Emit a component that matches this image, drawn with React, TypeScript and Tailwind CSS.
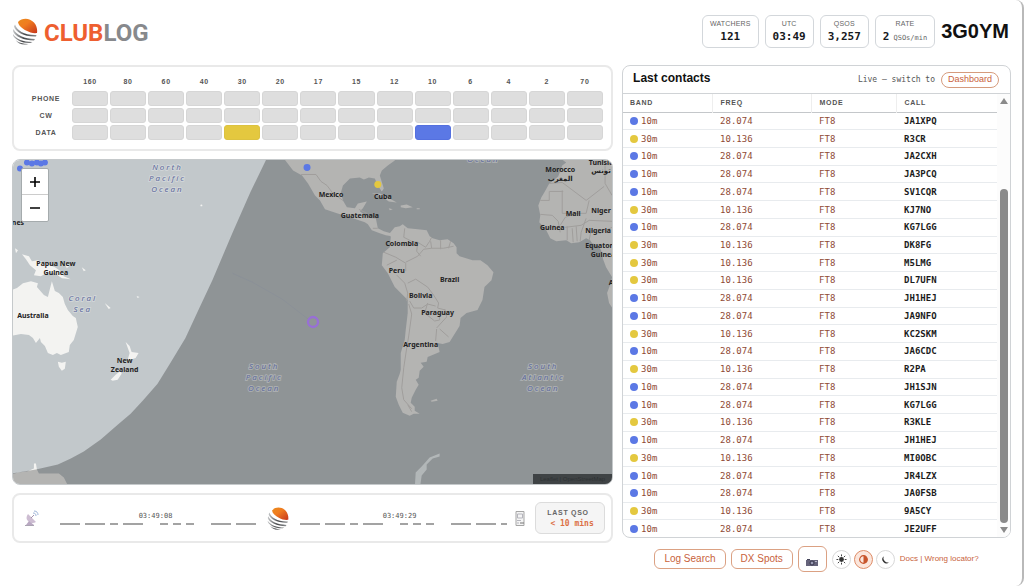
import { Fragment } from 'react'

type Contact = {
  band: '10m' | '30m';
  call: string;
}

const bands = ['160', '80', '60', '40', '30', '20', '17', '15', '12', '10', '6', '4', '2', '70']
const modes = ['PHONE', 'CW', 'DATA']

const contacts: Contact[] = [
  { band: '10m', call: 'JA1XPQ' },
  { band: '30m', call: 'R3CR' },
  { band: '10m', call: 'JA2CXH' },
  { band: '10m', call: 'JA3PCQ' },
  { band: '10m', call: 'SV1CQR' },
  { band: '30m', call: 'KJ7NO' },
  { band: '10m', call: 'KG7LGG' },
  { band: '30m', call: 'DK8FG' },
  { band: '30m', call: 'M5LMG' },
  { band: '30m', call: 'DL7UFN' },
  { band: '10m', call: 'JH1HEJ' },
  { band: '10m', call: 'JA9NFO' },
  { band: '30m', call: 'KC2SKM' },
  { band: '10m', call: 'JA6CDC' },
  { band: '30m', call: 'R2PA' },
  { band: '10m', call: 'JH1SJN' },
  { band: '10m', call: 'KG7LGG' },
  { band: '30m', call: 'R3KLE' },
  { band: '10m', call: 'JH1HEJ' },
  { band: '30m', call: 'MI0OBC' },
  { band: '10m', call: 'JR4LZX' },
  { band: '10m', call: 'JA0FSB' },
  { band: '30m', call: '9A5CY' },
  { band: '10m', call: 'JE2UFF' },
]

const countries: { x: number; y: number; lines: string[] }[] = [
  { x: 55, y: 266, lines: ['Papua New', 'Guinea'] },
  { x: 32, y: 318, lines: ['Australia'] },
  { x: 124, y: 363, lines: ['New', 'Zealand'] },
  { x: 17, y: 225, lines: ['nes'] },
  { x: 331, y: 197, lines: ['Mexico'] },
  { x: 383, y: 199, lines: ['Cuba'] },
  { x: 360, y: 218, lines: ['Guatemala'] },
  { x: 402, y: 246, lines: ['Colombia'] },
  { x: 397, y: 273, lines: ['Peru'] },
  { x: 450, y: 282, lines: ['Brazil'] },
  { x: 421, y: 298, lines: ['Bolivia'] },
  { x: 438, y: 315, lines: ['Paraguay'] },
  { x: 421, y: 347, lines: ['Argentina'] },
  { x: 561, y: 172, lines: ['Morocco', 'المغرب'] },
  { x: 602, y: 164, lines: ['Tunisia', 'تونس'] },
  { x: 574, y: 216, lines: ['Mali'] },
  { x: 602, y: 213, lines: ['Niger'] },
  { x: 553, y: 230, lines: ['Guinea'] },
  { x: 599, y: 233, lines: ['Nigeria'] },
  { x: 604, y: 248, lines: ['Equatorial', 'Guinea'] },
  { x: 622, y: 285, lines: ['Angola'] },
]

const seas: { x: number; y: number; lines: string[] }[] = [
  { x: 167, y: 170, lines: ['North', 'Pacific', 'Ocean'] },
  { x: 82, y: 301, lines: ['Coral', 'Sea'] },
  { x: 264, y: 369, lines: ['South', 'Pacific', 'Ocean'] },
  { x: 544, y: 369, lines: ['South', 'Atlantic', 'Ocean'] },
  { x: 484, y: 161, lines: ['Ocean'] },
]

function Globe({ className }: { className: string }) {
  return (
    <svg viewBox="0 0 50 54" className={className} aria-hidden="true">
      <defs>
        <linearGradient id="sun" x1="0" y1="0" x2="1" y2="1">
          <stop offset="0" stopColor="#e98a1c" />
          <stop offset="0.4" stopColor="#f07c1f" />
          <stop offset="1" stopColor="#c7361c" />
        </linearGradient>
        <linearGradient id="steel" x1="0" y1="0" x2="1" y2="0">
          <stop offset="0" stopColor="#c5c7c9" />
          <stop offset="0.5" stopColor="#45474a" />
          <stop offset="1" stopColor="#8b8d8f" />
        </linearGradient>
      </defs>
      <path d="M11 8C19-1 34-1 43 9c6 7 7 15 6 21-7 1-15-1-22-5C19 21 12 15 11 8z" fill="url(#sun)" />
      <path d="M5 13c3 12 20 22 43 21l-1 3C24 38 6 28 3 17z" fill="url(#steel)" />
      <path d="M2 22c5 12 22 20 43 20l-2 3C23 45 4 37 1 26z" fill="url(#steel)" />
      <path d="M1 32c6 10 20 16 39 16l-4 2C20 51 5 43 1 35z" fill="url(#steel)" />
      <path d="M6 44c6 5 15 8 26 8-10 3-21 0-26-8z" fill="url(#steel)" />
    </svg>
  )
}

function Stat({ label, value, unit }: { label: string; value: string; unit?: string }) {
  return (
    <div className="flex h-[33px] flex-col items-center justify-center rounded-md border border-[#d3d7db] px-[7px]">
      <div className="text-[7px] leading-[12px] tracking-wide text-[#666]">{label}</div>
      <div className="flex items-baseline gap-1 font-['DejaVu_Sans_Mono',monospace] leading-[14px]">
        <span className="text-[11px] font-bold text-[#16191d]">{value}</span>
        {unit && <span className="text-[7px] text-[#666]">{unit}</span>}
      </div>
    </div>
  )
}

function BandGrid() {
  return (
    <section className="rounded-lg border-2 border-[#e9e9e9] px-1.5 pt-[7px] pb-[7px]">
      <table className="w-full table-fixed border-separate border-spacing-[2px] text-[7px] font-bold tracking-widest text-[#555]">
        <thead>
          <tr className="h-[13px]">
            <td className="w-[48px]" />
            {bands.map((band) => (
              <th key={band} scope="col">{band}</th>
            ))}
          </tr>
        </thead>
        <tbody>
          {modes.map((mode) => (
            <tr key={mode} className="h-[15px] leading-[13px]">
              <th scope="row">{mode}</th>
              {bands.map((band) => {
                let color = 'border-[#d6d6d6] bg-[#dedede]'
                if (mode === 'DATA' && band === '30') color = 'border-[#dcc240] bg-[#e4c83f]'
                if (mode === 'DATA' && band === '10') color = 'border-[#5470df] bg-[#5b78e5]'
                return <td key={band} className={`rounded-[3px] border p-0 ${color}`} />
              })}
            </tr>
          ))}
        </tbody>
      </table>
    </section>
  )
}

function WorldMap() {
  return (
    <section className="relative h-[326px] overflow-hidden rounded-lg border border-[#c5c9cb]">
      <svg viewBox="12 159 601 326" preserveAspectRatio="xMidYMid slice" className="block h-full w-full" role="img" aria-label="World map">
        <rect x="0" y="150" width="640" height="350" fill="#c2c8cb" />
        {/* land */}
        <g fill="#f3f3f1">
          <path d="M10 290L16 288 22 283 30 281 37 283 36 287 43 295 47 297 49 289 51 281 54 291 58 293 62 297 64 304 67 310 72 316 75 318 77 327 73 340 69 345 68 352 60 355 56 353 52 355 47 353 44 346 40 342 39 338 35 343 32 338 28 335 20 334 10 336z" />
          <path d="M57 362l4 1 4-1-1 7-3 2-3-4z" />
          <path d="M125 342l4 4 2 6 7 1-3 5-3 1-5 1 2-7zM120 371l1 3-4 6-5 1-2-1 5-5z" />
          <path d="M21 254l7 2 3 5 6-1 8 3 9 4 6 4 3 5 7 3-9-1-7-5-7-1-7 4-7-1 2-5-6-5-4-6zM14 248l3 2-2 3zM81 267l4 3-2 1zM64 263l5 2-3 3zM104 303l6 5-2 1zM136 296l3 1-2 1zM139 293l3 1z" />
          <circle cx="201" cy="205" r="1" />
          <path d="M283 157L293 170 302 175 308 183 315 195 320 200 325 209 337 213 350 217 365 222 368 224 372 230 380 233 386 235 392 236 391 233 384 231 378 228 376 218 365 215 360 211 363 208 367 201 358 203 355 208 347 207 343 200 341 192 343 185 350 178 360 177 364 179 369 177 375 178 378 185 382 191 384 188 380 175 382 170 388 165 395 160 396 156z" />
          <path d="M372 193l8 0 8 4 9 5-8-1-7-5zM401 205l6-1 6 3-7 1-5-1zM417 208h3v1h-3zM389 208l4 1-3 1z" />
          <path d="M390 233L395 227 400 226 403 224 408 228 418 229 427 230 430 236 433 238 440 240 448 239 454 243 457 247 457 253 460 256 473 260 481 260 488 265 494 272 492 280 485 287 483 300 478 310 467 313 461 318 460 326 450 342 443 344 438 343 440 352 428 357 427 362 421 363 424 367 420 371 419 378 416 380 419 385 416 390 412 398 411 403 415 407 415 411 420 414 414 414 410 416 403 413 399 405 396 397 397 382 400 374 401 370 401 353 405 340 406 330 408 313 408 300 395 287 388 273 382 265 383 253 390 247 391 237z" />
          <path d="M431 401l6-2 1 2-6 1z" />
          <path d="M560 157L567 162 563 165 559 176 550 183 545 192 542 197 539 205 541 215 540 222 547 230 551 238 557 241 567 240 572 243 580 242 587 238 591 240 593 243 599 245 602 250 604 259 607 267 613 277 611 285 608 293 610 303 616 312 640 300 640 150z" />
        </g>
        <path d="M440 454L430 458 422 467 416 473 415 490H420L422 476 427 470 427 465 433 459 440 457z" fill="#f1f7f9" />
        <path d="M10 475l7-2 9-1 7-3v-5h2l1 6 2 4h20l5 4 5 10H10z" fill="#f3f3f1" />
        {/* borders */}
        <g fill="none" stroke="#d8d5d2" strokeWidth="1" strokeLinejoin="round">
          <path d="M301 174l6 0 9 0 5 7 6 4 6 8 10 7M359 209l8 4-2 4M368 217l8 1M373 228l5 0" />
          <path d="M405 228l-1 9 8 4 6 1-1 9 4 5M384 252l12 5 10 6 0 8M418 242l8 5 4-6 2-4M432 248l-1-7M441 249l0-9M449 248l2-7M406 262l12-6 6-7 8-1 12 0 10-2M387 265l10-5M397 275l8 8 3 10-1 8M408 283l8-4 12 8 6 8 5 8-1 5 8 2M410 301l4 7 8 0 6-4 8 2M409 304l3 10-3 22-2 12-3 20-2 20 2 12 8 9M428 303l-3 10 10 8 5-1 0-7M445 309l2 8-10 11M440 329l9 8M437 329l-1 12M408 405l4 7" />
          <path d="M563 190l0 23 24 0M550 183l13-1 24 18 18-14M541 200l9 0 0-9 14 0M577 213l-11 4-5 8M541 214l12 1 6 6 2 11M587 213l3-13M587 218l-5 14-1 9M568 226l0 14M573 228l1 14M577 226l1 15M566 227l16-2 8-5 23 1M606 165l0 18 7 12M547 229l8-4M590 240l2-10 9 3 12-6" />
        </g>
        {/* night side */}
        <path d="M267 157L250 192 232 233 212 280 198 310 185 338 170 363 157 384 143 400 130 414 117 425 100 440 83 452 70 459 57 465 35 470 10 474V500H640V150H270z" fill="#000" opacity="0.26" />
        <path d="M232 273l20 9 30 17 26 20" fill="none" stroke="#878c98" strokeWidth="1" opacity="0.5" />
        {/* labels */}
        <g fontFamily="'Noto Sans', 'DejaVu Sans', sans-serif" fontStyle="italic" fontSize="8" letterSpacing="2" textAnchor="middle" fill="#5e6b9c" stroke="#ffffff" strokeOpacity="0.25" strokeWidth="2" paintOrder="stroke">
          {seas.map((sea, i) => (
            <Fragment key={i}>
              {sea.lines.map((line, n) => (
                <text key={line} x={sea.x} y={sea.y + n * 11}>{line}</text>
              ))}
            </Fragment>
          ))}
        </g>
        <g fontFamily="'Noto Sans', 'DejaVu Sans', sans-serif" fontWeight="700" fontSize="7" textAnchor="middle" fill="#222">
          {countries.map((country, i) => (
            <Fragment key={i}>
              {country.lines.map((line, n) => (
                <text key={line} x={country.x} y={country.y + n * 9}>{line}</text>
              ))}
            </Fragment>
          ))}
        </g>
        {/* stations */}
        <g fill="#5b78e5">
          <circle cx="19" cy="168" r="3" />
          <circle cx="26" cy="162" r="3" />
          <circle cx="31" cy="163" r="3" />
          <circle cx="36" cy="162" r="3" />
          <circle cx="40" cy="163" r="3" />
          <circle cx="44" cy="162" r="3" />
          <circle cx="307" cy="167" r="3.5" />
        </g>
        <circle cx="378" cy="184" r="3.5" fill="#e4c83f" />
        <circle cx="313" cy="322" r="5" fill="none" stroke="#986fd6" strokeWidth="2.4" />
      </svg>
      <div className="absolute top-2 left-2 flex flex-col divide-y divide-[#ccc] rounded-xs border border-[#a5abad] bg-white">
        <button type="button" aria-label="Zoom in" className="flex h-[26px] w-[26px] items-center justify-center">
          <svg viewBox="0 0 12 12" className="h-3 w-3"><path d="M6 1v10M1 6h10" stroke="#000" strokeWidth="1.6" /></svg>
        </button>
        <button type="button" aria-label="Zoom out" className="flex h-[26px] w-[26px] items-center justify-center">
          <svg viewBox="0 0 12 12" className="h-3 w-3"><path d="M1 6h10" stroke="#000" strokeWidth="1.6" /></svg>
        </button>
      </div>
      <div className="absolute right-0 bottom-0 h-[10px] w-[79px] bg-[#3f4345] text-center text-[6px] leading-[10px] whitespace-nowrap text-[#2e3234]">
        Leaflet | OpenStreetMap
      </div>
    </section>
  )
}

// Q S O in morse, cut off where the track ends
function MorseTrack({ time, className }: { time: string; className: string }) {
  const letters = ['--.-', '...', '---']
  return (
    <div className={`min-w-0 overflow-hidden pb-0.5 ${className}`}>
      <div className="pr-2 text-center font-['DejaVu_Sans_Mono',monospace] text-[7px] leading-[14px] text-[#555]">{time}</div>
      <div className="flex gap-[17px]">
        {letters.map((letter, i) => (
          <div key={i} className="flex shrink-0 gap-[5px]">
            {letter.split('').map((sign, n) => (
              <span key={n} className={sign === '-' ? 'h-[2px] w-5 bg-[#a3a3a3]' : 'h-[2px] w-2 bg-[#a3a3a3]'} />
            ))}
          </div>
        ))}
      </div>
    </div>
  )
}

function ActivityBar() {
  return (
    <section className="flex h-[50px] items-center rounded-lg border-2 border-[#e9e9e9] pr-1.5 pl-[11px]">
      <svg viewBox="0 0 14 16" className="mr-[21px] h-4 w-[14px] shrink-0" aria-hidden="true">
        <path d="M3 4l8 8c-3 2-6 1-8-1S1 7 3 4z" fill="#cdbdd2" />
        <path d="M1 15l3-4 5 4z" fill="#b9a8c2" />
        <path d="M6 8l3-3" stroke="#a292ae" />
        <path d="M8 3c2 0 3 1 3 3M9 1c3 0 4 2 4 4" fill="none" stroke="#9db4d8" />
        <path d="M0 15.5h9" stroke="#aaa4b2" />
      </svg>
      <MorseTrack time="03:49:08" className="flex-[199]" />
      <Globe className="mr-[11px] ml-2 h-[23px] w-[22px] shrink-0" />
      <MorseTrack time="03:49:29" className="flex-[207]" />
      <svg viewBox="0 0 10 15" className="mr-2.5 ml-2 h-[15px] w-[10px] shrink-0" aria-hidden="true">
        <path d="M1 .5h8v14H1z" fill="#f4f4f4" stroke="#a5a5a5" />
        <path d="M2.500 3h5v4h-5zM2 9.500h4M2 12h2" fill="none" stroke="#b5b5bd" />
        <path d="M5 12h4" stroke="#777" />
      </svg>
      <div className="flex h-8 w-[70px] shrink-0 flex-col items-center justify-center rounded-md border border-[#dcdcdc] bg-[#f5f5f5]">
        <div className="pr-1 text-[7px] leading-[10px] font-bold tracking-widest text-[#666]">LAST QSO</div>
        <div className="pl-1 font-['DejaVu_Sans_Mono',monospace] text-[8px] leading-[11px] font-bold text-[#dc7146]">&lt; 10 mins</div>
      </div>
    </section>
  )
}

function Contacts() {
  return (
    <section className="overflow-hidden rounded-lg border border-[#d0d3d6]">
      <header className="flex h-7 items-center border-b border-[#d0d3d6] pr-[11px] pl-2.5">
        <h2 className="flex-1 pb-1 text-[12px] font-bold text-[#111]">Last contacts</h2>
        <span className="mr-1.5 font-['DejaVu_Sans_Mono',monospace] text-[8px] text-[#555]">Live — switch to</span>
        <button type="button" className="h-4 rounded-full border border-[#d59b7d] px-1.5 text-[9px] leading-[13px] text-[#c95f3c]">
          Dashboard
        </button>
      </header>
      <div className="flex">
        <table className="h-[443px] min-w-0 flex-1 table-fixed border-collapse text-left">
          <thead>
            <tr className="h-[18px] border-b border-[#c4c7ca] text-[7px] leading-[10px] tracking-widest text-[#555]">
              <th scope="col" className="w-[89px] border-r border-[#eee] pl-[7px]">BAND</th>
              <th scope="col" className="w-[99px] border-r border-[#eee] pl-2">FREQ</th>
              <th scope="col" className="w-[85px] border-r border-[#eee] pl-2">MODE</th>
              <th scope="col" className="pl-2">CALL</th>
            </tr>
          </thead>
          <tbody className="font-['DejaVu_Sans_Mono',monospace] text-[9px] leading-[12px] text-[#8f4a35]">
            {contacts.map((contact, i) => (
              <tr key={i} className="border-b border-[#e8ebee] last:border-b-0">
                <td className="py-0 pl-[7px]">
                  <span className="flex items-center gap-[3px]">
                    <span className={contact.band === '10m' ? 'h-2 w-2 rounded-full bg-[#5b78e5]' : 'h-2 w-2 rounded-full bg-[#e4c83f]'} />
                    {contact.band}
                  </span>
                </td>
                <td className="py-0 pl-2">{contact.band === '10m' ? '28.074' : '10.136'}</td>
                <td className="py-0 pl-2">FT8</td>
                <td className="py-0 pl-2 font-bold text-[#1c1c1c]">{contact.call}</td>
              </tr>
            ))}
          </tbody>
        </table>
        <div className="flex w-[13px] flex-col items-center justify-between bg-[#fcfcfc] pt-1 pb-1">
          <svg viewBox="0 0 8 6" className="h-1.5 w-2"><path d="M4 0l4 6H0z" fill="#8a8a8a" /></svg>
          <div className="mt-auto mb-1 h-[334px] w-2 rounded-full bg-[#8a8a8a]" />
          <svg viewBox="0 0 8 6" className="h-1.5 w-2"><path d="M4 6L0 0h8z" fill="#8a8a8a" /></svg>
        </div>
      </div>
    </section>
  )
}

function Footer() {
  return (
    <div className="mt-2 flex items-center justify-center gap-[5px] text-[#c8623c]">
      <button type="button" className="h-5 rounded-md border border-[#dba183] px-[9px] text-[10px] leading-[18px]">Log Search</button>
      <button type="button" className="h-5 rounded-md border border-[#dba183] px-[9px] text-[10px] leading-[18px]">DX Spots</button>
      <button type="button" aria-label="Camera" className="flex h-[26px] w-[29px] items-end justify-center rounded-md border border-[#dba183] pb-[5px]">
        <svg viewBox="0 0 12 7" className="h-[7px] w-3">
          <path d="M0 1h12v6H0z" fill="#65637a" />
          <path d="M1 0h3v1H1z" fill="#44445a" />
          <circle cx="6" cy="4" r="2" fill="#9c9cb5" stroke="#333348" />
          <path d="M9 2h2v1H9z" fill="#b7b7c8" />
        </svg>
      </button>
      <div className="flex items-center gap-[3px]">
        <button type="button" aria-label="Light theme" className="flex h-[19px] w-[19px] items-center justify-center rounded-full border border-[#d8d8d8]">
          <svg viewBox="0 0 12 12" className="h-[11px] w-[11px]">
            <circle cx="6" cy="6" r="2.600" fill="#333" />
            <path d="M6 .5v2M6 9.500v2M.5 6h2M9.500 6h2M2 2l1.500 1.500M8.500 8.500L10 10M10 2L8.500 3.500M3.500 8.500L2 10" stroke="#333" />
          </svg>
        </button>
        <button type="button" aria-label="Auto theme" className="flex h-[19px] w-[19px] items-center justify-center rounded-full border border-[#df8d68] bg-[#fbe6dc]">
          <svg viewBox="0 0 12 12" className="h-[11px] w-[11px]">
            <circle cx="6" cy="6" r="4.200" fill="none" stroke="#c8552c" strokeWidth="1.200" />
            <path d="M6 1.800a4.200 4.200 0 0 1 0 8.400z" fill="#c8552c" />
          </svg>
        </button>
        <button type="button" aria-label="Dark theme" className="flex h-[19px] w-[19px] items-center justify-center rounded-full border border-[#d8d8d8]">
          <svg viewBox="0 0 12 12" className="h-[11px] w-[11px]">
            <path d="M4 2.500a5 5 0 0 0 6 6.500 4.300 4.300 0 1 1-6-6.500z" fill="#333" />
          </svg>
        </button>
      </div>
      <p className="text-[8px] leading-[10px]">
        <a href="#docs">Docs</a> | <a href="#locator">Wrong locator?</a>
      </p>
    </div>
  )
}

export default function App() {
  return (
    <div className="min-h-screen rounded-r-lg border-r-2 border-[#b9b9b9] bg-white pr-[11px] pl-3 font-['Liberation_Sans',Arial,sans-serif]">
      <header className="flex h-[65px] items-center justify-between pb-[3px]">
        <h1 className="flex items-center gap-1.5">
          <Globe className="h-[27px] w-[26px]" />
          <span className="pt-1 font-[Roboto,sans-serif] text-[24px] leading-[30px] font-bold text-[#ee5f30]">
            CLUB<span className="text-[#87898c]">LOG</span>
          </span>
        </h1>
        <div className="flex items-center gap-1.5">
          <Stat label="WATCHERS" value="121" />
          <Stat label="UTC" value="03:49" />
          <Stat label="QSOS" value="3,257" />
          <Stat label="RATE" value="2" unit="QSOs/min" />
          <div className="pr-0.5 text-[20px] font-bold text-[#111]">3G0YM</div>
        </div>
      </header>
      <main className="grid grid-cols-[17fr_11fr] gap-[9px]">
        <div className="flex min-w-0 flex-col gap-2">
          <BandGrid />
          <WorldMap />
          <ActivityBar />
        </div>
        <div className="min-w-0">
          <Contacts />
          <Footer />
        </div>
      </main>
    </div>
  )
}
